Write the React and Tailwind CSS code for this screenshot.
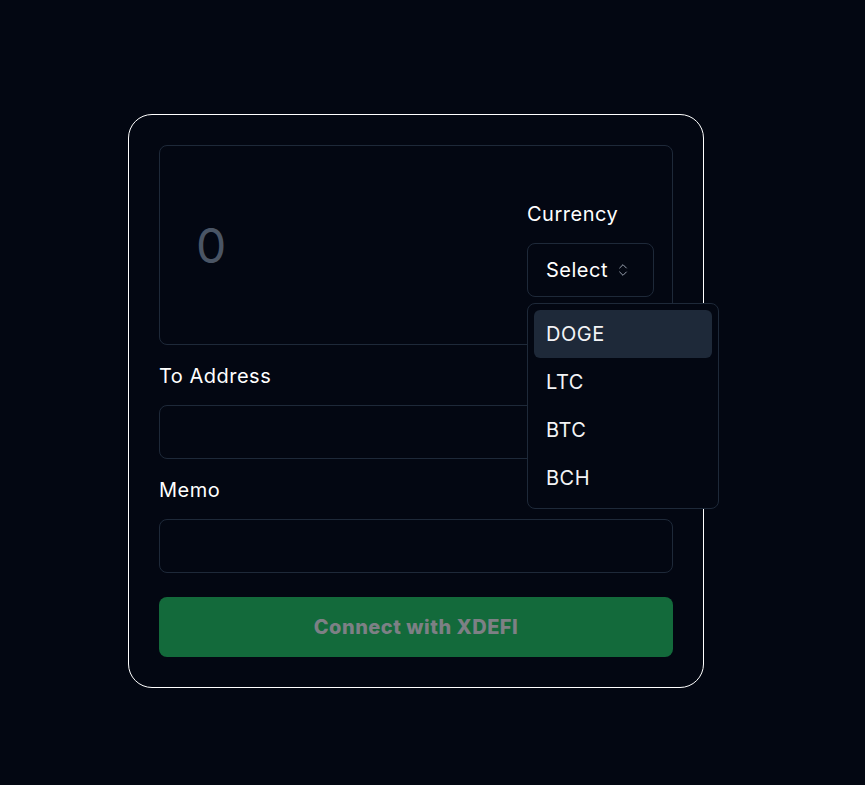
import { ChevronsUpDown } from "lucide-react";

const currencies = ["DOGE", "LTC", "BTC", "BCH"];

function Field({ label }) {
  return (
    <div className="flex flex-col">
      <label className="mt-[17px] text-xl leading-7 text-white">{label}</label>
      <input className="mt-[15px] h-[54px] w-full rounded-lg border border-gray-800 bg-transparent px-4 text-white outline-none" />
    </div>
  );
}

export default function App() {
  return (
    <div
      className="min-h-screen bg-[#030712] pt-[114px] pl-[128px] tracking-[0.5px]"
      style={{ fontFamily: "Inter, 'Noto Sans', sans-serif" }}
    >
      <div className="w-[576px] rounded-3xl border border-white p-[30px]">
        <div className="flex h-[200px] items-center justify-between rounded-lg border border-gray-800 pl-[36px] pr-[18px]">
          <input
            placeholder="0"
            className="w-[280px] bg-transparent text-5xl text-white placeholder:text-gray-600 outline-none"
          />
          <div className="relative flex flex-col pt-[6px]">
            <span className="text-xl leading-7 text-white">Currency</span>
            <button className="mt-[15px] flex h-[54px] w-[127px] items-center gap-[7px] rounded-lg border border-gray-800 pl-[18px] text-xl text-white">
              Select
              <ChevronsUpDown size={16} strokeWidth={1.5} className="text-gray-400" />
            </button>
            <div className="absolute left-0 top-full z-10 mt-[6px] w-[192px] rounded-lg border border-gray-800 bg-[#030712] p-[6px]">
              {currencies.map((c, i) => (
                <div
                  key={c}
                  className={`flex h-12 items-center rounded-md px-3 text-xl text-gray-100 ${
                    i === 0 ? "bg-gray-800" : ""
                  }`}
                >
                  {c}
                </div>
              ))}
            </div>
          </div>
        </div>

        <Field label="To Address" />
        <Field label="Memo" />

        <button className="mt-6 h-[60px] w-full rounded-lg bg-[#136a3b] text-xl font-extrabold text-[#7d8085]">
          Connect with XDEFI
        </button>
      </div>
    </div>
  );
}
